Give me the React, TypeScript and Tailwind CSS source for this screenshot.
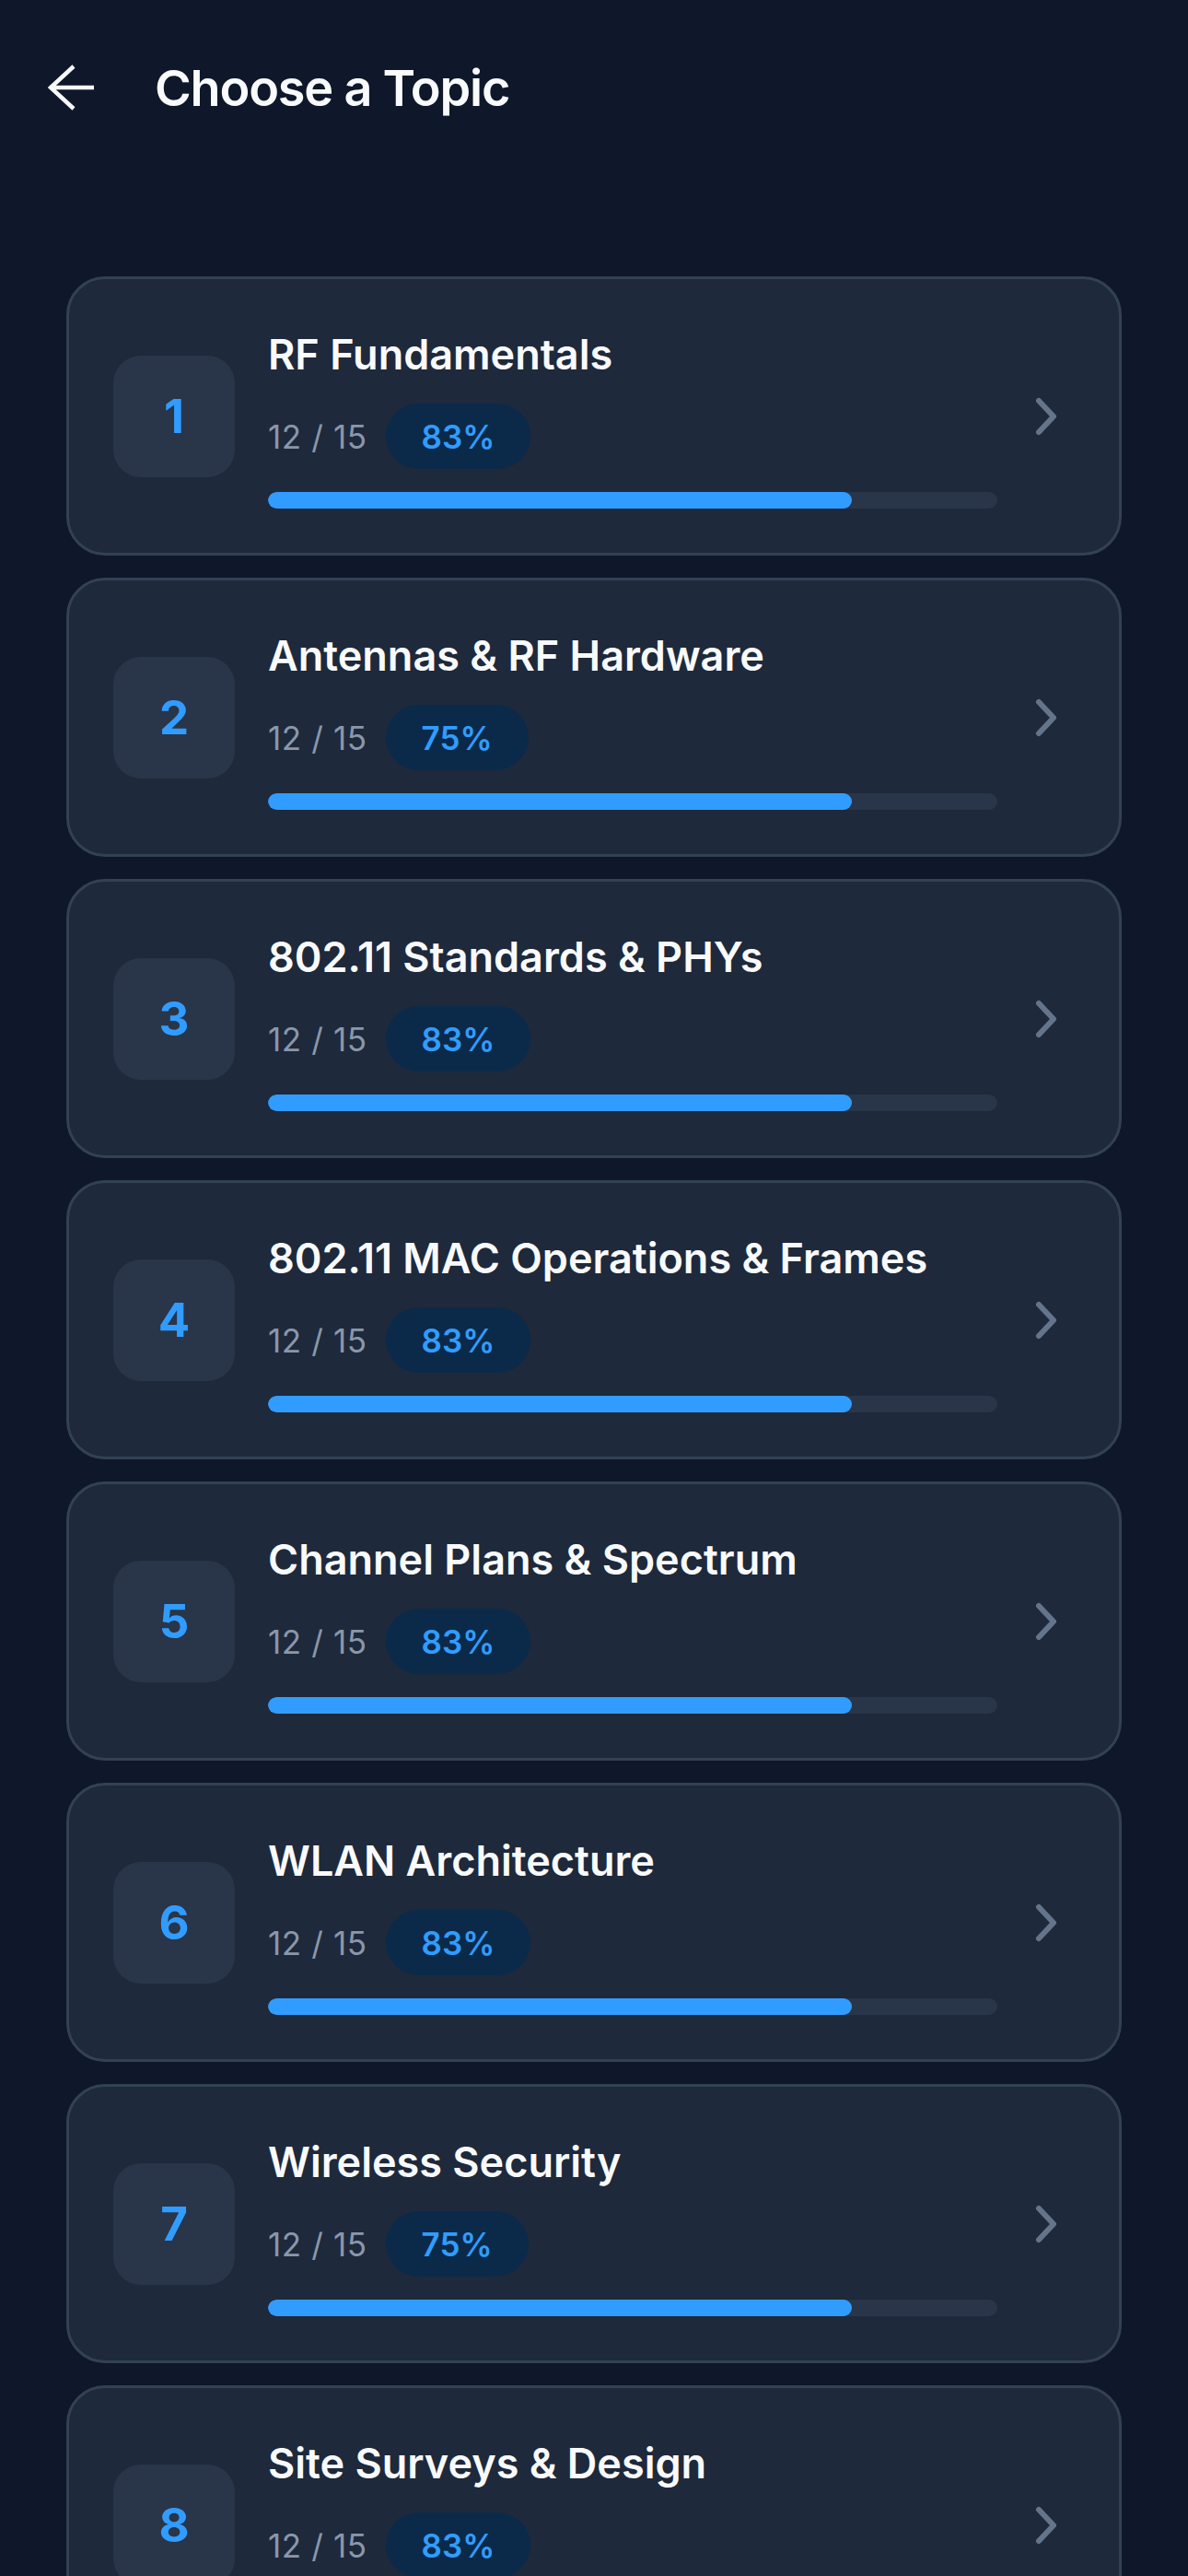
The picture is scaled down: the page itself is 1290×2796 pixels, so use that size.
import React from "react";

type Topic = { n: number; title: string; done: number; total: number; pct: string };

const topics: Topic[] = [
  { n: 1, title: "RF Fundamentals", done: 12, total: 15, pct: "83%" },
  { n: 2, title: "Antennas & RF Hardware", done: 12, total: 15, pct: "75%" },
  { n: 3, title: "802.11 Standards & PHYs", done: 12, total: 15, pct: "83%" },
  { n: 4, title: "802.11 MAC Operations & Frames", done: 12, total: 15, pct: "83%" },
  { n: 5, title: "Channel Plans & Spectrum", done: 12, total: 15, pct: "83%" },
  { n: 6, title: "WLAN Architecture", done: 12, total: 15, pct: "83%" },
  { n: 7, title: "Wireless Security", done: 12, total: 15, pct: "75%" },
  { n: 8, title: "Site Surveys & Design", done: 12, total: 15, pct: "83%" },
];

function TopicCard({ t }: { t: Topic }) {
  const fill = (t.done / t.total) * 100;
  return (
    <div className="flex h-[303px] items-center rounded-[42px] border-[3px] border-[#334155] bg-[#1e293b] pl-[48px]">
      <div className="flex h-[132px] w-[132px] shrink-0 items-center justify-center rounded-[30px] bg-[#293548]">
        <span className="text-[51px] font-bold leading-none text-[#319cff]">{t.n}</span>
      </div>
      <div className="ml-[36px] mt-[7px] flex w-[792px] shrink-0 flex-col">
        <div className="whitespace-nowrap text-[45px] font-semibold leading-[54px] text-[#f8fafc]">{t.title}</div>
        <div className="mt-[26px] flex h-[71px] items-center gap-[20px]">
          <span className="text-[35px] leading-[40px] tracking-[0.6px] text-[#8a97ab]">
            {t.done} / {t.total}
          </span>
          <span className="flex h-[71px] items-center rounded-full bg-[#0b2a4a] px-[39px] text-[35px] font-semibold leading-[40px] text-[#319cff]">
            {t.pct}
          </span>
        </div>
        <div className="mt-[25px] h-[18px] w-full overflow-hidden rounded-full bg-[#293548]">
          <div className="h-full rounded-full bg-[#319cff]" style={{ width: `${fill}%` }} />
        </div>
      </div>
      <svg className="ml-[40px] shrink-0" width="28" height="44" viewBox="0 0 28 44" fill="none">
        <polyline
          points="5,5 21,22 5,39"
          stroke="#64748b"
          strokeWidth="6"
          strokeLinecap="round"
          strokeLinejoin="round"
        />
      </svg>
    </div>
  );
}

export default function App() {
  return (
    <div
      className="h-[2796px] w-[1290px] overflow-hidden bg-[#0f172a]"
      style={{ fontFamily: "Inter, 'Noto Sans', sans-serif" }}
    >
      <div className="mt-[64px] flex h-[64px] items-center pl-[52px]">
        <svg className="-mt-[2px] shrink-0" width="52" height="52" viewBox="0 0 52 52" fill="none">
          <polyline points="28,3 3,26 28,49" stroke="#f8fafc" strokeWidth="4.5" strokeLinejoin="miter" />
          <line x1="3" y1="26" x2="50" y2="26" stroke="#f8fafc" strokeWidth="4.5" />
        </svg>
        <h1 className="ml-[64px] text-[54px] font-semibold leading-[64px] tracking-[-1.2px] text-[#f8fafc]">
          Choose a Topic
        </h1>
      </div>
      <div className="mt-[172px] flex flex-col gap-[24px] px-[72px]">
        {topics.map((t) => (
          <TopicCard key={t.n} t={t} />
        ))}
      </div>
    </div>
  );
}
